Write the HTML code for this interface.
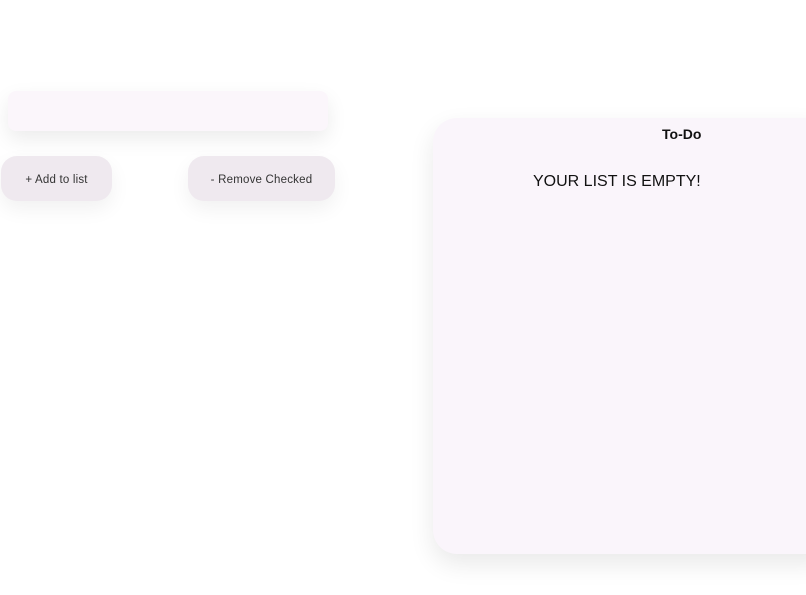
<!DOCTYPE html>
<html><head><meta charset="utf-8"><style>
html,body{margin:0;padding:0;background:#fff;width:806px;height:595px;overflow:hidden;font-family:"Liberation Sans",sans-serif;}
.input{position:absolute;left:8px;top:91px;width:320px;height:40px;background:#fbf6fb;border-radius:8px;box-shadow:0 8px 20px rgba(0,0,0,0.08);}
.btn{position:absolute;top:156px;height:45px;background:#efe9ef;border-radius:16px;box-shadow:0 8px 20px rgba(0,0,0,0.06);color:#333;font-size:12px;line-height:49px;text-align:center;letter-spacing:0.2px;}
.b1{left:1px;width:111px;font-size:11.5px;}
.b2{left:188px;width:147px;font-size:11.5px;}
.card{position:absolute;left:433px;top:118px;width:400px;height:436px;background:#faf5fb;border-radius:24px;box-shadow:0 10px 25px rgba(0,0,0,0.09);}
.title{position:absolute;left:662px;top:126px;font-weight:bold;font-size:14px;color:#111;}
.empty{position:absolute;left:533px;top:173px;font-size:16px;color:#111;}
</style></head><body>
<div class="input"></div>
<div class="btn b1">+ Add to list</div>
<div class="btn b2">- Remove Checked</div>
<div class="card"></div>
<div class="title">To-Do</div>
<div class="empty">YOUR LIST IS EMPTY!</div>
</body></html>
